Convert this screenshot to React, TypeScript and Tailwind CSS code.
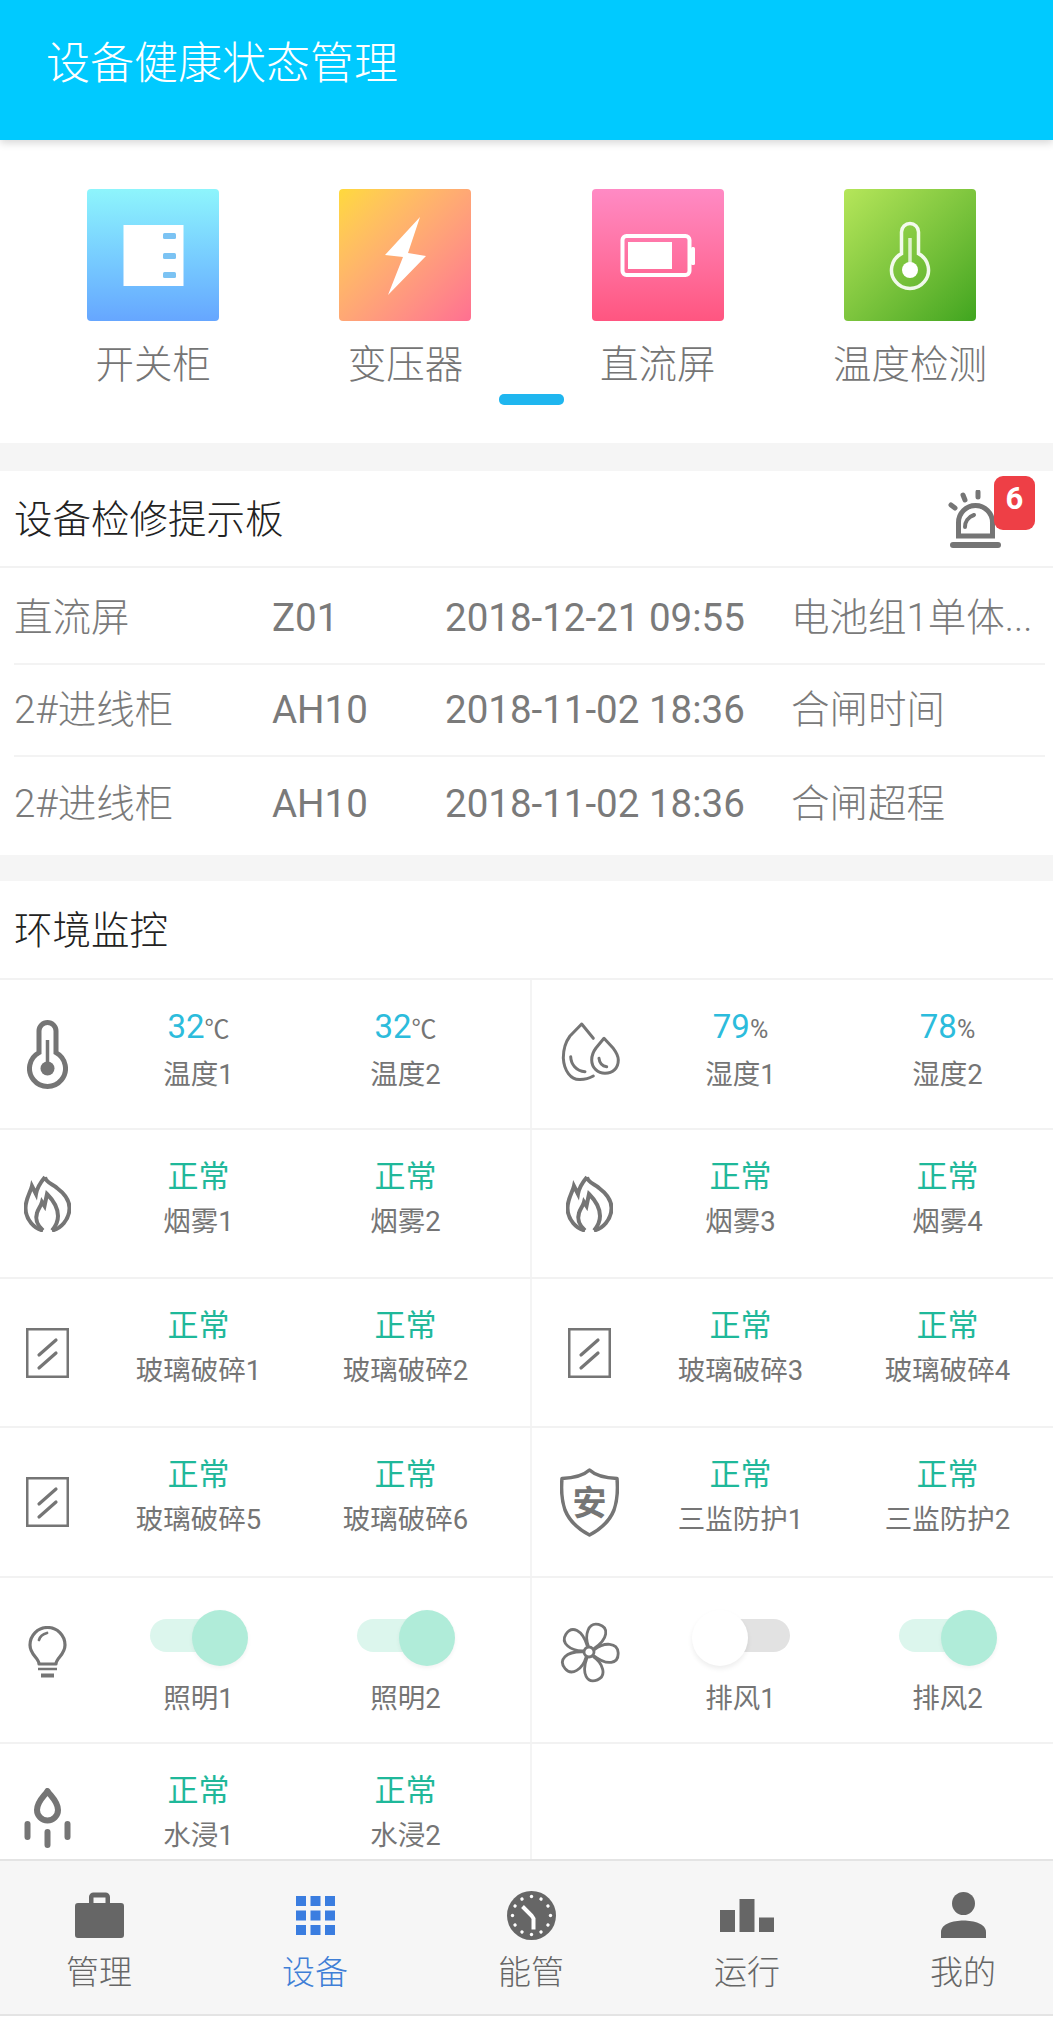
import type { ReactNode } from "react";

const GRAY = "#757575";

function ThermoIcon() {
  return (
    <svg width="41" height="69" viewBox="0 0 41 69" fill="none">
      <path d="M12 32.600V11a8.500 8.500 0 0 1 17 0V32.600a18 18 0 1 1-17 0Z" stroke={GRAY} strokeWidth="5" />
      <path d="M20.500 20V46" stroke={GRAY} strokeWidth="3.500" />
      <circle cx="20.500" cy="48.500" r="7" fill={GRAY} />
    </svg>
  );
}

function DropsIcon() {
  return (
    <svg className="mb-[4px] ml-[4px] overflow-visible" width="60" height="60" viewBox="0 0 60 60" fill="none" stroke={GRAY} strokeWidth="3" strokeLinecap="round" strokeLinejoin="round">
      <path d="M32.300 16.300 20.700 2 9 14C4.500 20 2.300 28 2.300 36 3 49 10 58 19 57.500 24 57.500 28 56.500 32.300 54" />
      <path d="M9.700 34.700C10 42 15 49 24 49.700" />
      <path d="M43 16.300 35 26C32 30 30.700 34 30.700 38 30.700 46 37 51.300 44 51.300 52 51.300 57.300 46 57.300 38 57.300 33 55 30 52 26Z" />
      <path d="M38 36.300C38.500 41 41 44 45.700 44.700" />
    </svg>
  );
}

function FlameIcon() {
  return (
    <svg width="47" height="57" viewBox="0 0 47 57" fill="none" stroke={GRAY} strokeWidth="4" strokeLinejoin="miter">
      <path d="M21 2C22 8 29 9 33 13 41 19 45.500 26 45.500 33 45.500 45 36 54 28 55.500M21 2C16 8 13 13 12 19L8 11C7 16 1.500 24 1.500 33 1.500 45 11 54 19 55.500" />
      <path d="M19 55.500C13 50 11 44 13 38 14 34 17 31 18 27L20.500 31 23 19C29 25 34 33 34 41 34 47 31 52 28 55.500" />
    </svg>
  );
}

function GlassIcon() {
  return (
    <svg width="43" height="50" viewBox="0 0 43 50" fill="none" stroke={GRAY}>
      <rect x="1.250" y="1.250" width="40.500" height="47.500" strokeWidth="2.500" />
      <path d="M13 27 30 12M13 40 30 25" strokeWidth="3.200" strokeLinecap="round" />
    </svg>
  );
}

function ShieldIcon() {
  return (
    <svg width="59" height="69" viewBox="0 0 59 69" fill="none">
      <path
        d="M29.500 2C24 7 15 10 2 10.500 1 22 1.500 32 5 42c4 10 13 19 24.500 25C41 61 50 52 54 42c3.500-10 4-20 3-31.500C44 10 35 7 29.500 2Z"
        stroke={GRAY}
        strokeWidth="3.500"
        strokeLinejoin="round"
      />
      <text x="29.500" y="47" textAnchor="middle" fontSize="34" fontWeight="700" fill={GRAY} fontFamily="Noto Sans CJK SC, sans-serif">
        安
      </text>
    </svg>
  );
}

function BulbIcon() {
  return (
    <svg className="mb-[16px]" width="39" height="53" viewBox="0 0 39 53" fill="none" stroke={GRAY}>
      <path d="M11 38c0-6-9-9-9-19a17.500 17.500 0 0 1 35 0c0 10-9 13-9 19Z" strokeWidth="3.200" strokeLinejoin="round" />
      <path d="M11 14c1-4 4-6 8-7" strokeWidth="2.800" strokeLinecap="round" />
      <path d="M10 43h19" strokeWidth="2.500" />
      <path d="M13 49.500h13" strokeWidth="4" />
    </svg>
  );
}

function FanIcon() {
  return (
    <svg className="mb-[16px]" width="62" height="64" viewBox="-31 -32 62 64" fill="none" stroke={GRAY} strokeWidth="2.800">
      {[25, 97, 169, 241, 313].map((deg) => (
        <path key={deg} d="M-3-5C-12-14-13-27-3-29 8-31 12-20 3-5" transform={`rotate(${deg})`} />
      ))}
      <circle r="5" fill="#fff" />
    </svg>
  );
}

function WaterIcon() {
  return (
    <svg width="47" height="60" viewBox="0 0 47 60" fill="none" stroke={GRAY} strokeLinecap="round">
      <path d="M23.500 3c3 5 10.500 10 10.500 19a10.500 10.500 0 0 1-21 0c0-9 7.500-14 10.500-19Z" strokeWidth="6" strokeLinejoin="round" />
      <path d="M3.500 36v13M23.500 44v13M43.500 36v13" strokeWidth="6" />
    </svg>
  );
}

function Reading({ value, unit, label, tone }: { value: string; unit?: string; label: string; tone: "num" | "ok" }) {
  return (
    <div className="flex flex-col items-center pt-[30px]">
      <div className={`leading-[34px] ${tone === "num" ? "text-[33px] text-[#2cbcdc]" : "text-[31px] text-[#1fb89a]"}`}>
        {value}
        {unit && <span className="text-[25px] text-[#757575]">{unit}</span>}
      </div>
      <div className="mt-[11px] text-[27.5px] leading-[34px] text-[#757575] whitespace-nowrap">{label}</div>
    </div>
  );
}

function Toggle({ label, on }: { label: string; on: boolean }) {
  return (
    <div className="flex flex-col items-center pt-[32px]">
      <div className="relative h-[56px] w-[98px]">
        <div
          className={`absolute top-[9px] h-[33px] rounded-full ${
            on ? "left-0 w-[84px] bg-[#dcf6ed]" : "right-0 w-[84px] bg-[#e2e2e2]"
          }`}
        />
        <div
          className={`absolute top-0 h-[56px] w-[56px] rounded-full ${
            on
              ? "right-0 bg-[#b0ecd9] shadow-[0_2px_4px_rgba(0,0,0,0.05)]"
              : "left-0 bg-white shadow-[0_3px_5px_rgba(0,0,0,0.07)]"
          }`}
        />
      </div>
      <div className="mt-[16px] text-[27.5px] leading-[34px] text-[#757575]">{label}</div>
    </div>
  );
}

function Cell({ icon, side, children }: { icon?: ReactNode; side: "l" | "r"; children?: ReactNode }) {
  return (
    <div
      className={`grid h-full ${
        side === "l"
          ? "grid-cols-[95px_207px_207px] border-r-2 border-[#f4f4f4]"
          : "grid-cols-[105px_207px_207px]"
      }`}
    >
      <div className={`flex items-center justify-center ${side === "l" ? "" : "pl-[9px]"}`}>{icon}</div>
      {children}
    </div>
  );
}

function EnvRow({ h, left, right }: { h: string; left: ReactNode; right: ReactNode }) {
  return (
    <div className={`grid shrink-0 grid-cols-[532px_521px] border-b-2 border-[#f2f2f2] ${h}`}>
      {left}
      {right}
    </div>
  );
}

function ok(label: string) {
  return <Reading value="正常" label={label} tone="ok" />;
}

function Feature({ label, card, children }: { label: string; card: string; children: ReactNode }) {
  return (
    <div className="flex flex-col items-center">
      <div className={`h-[132px] w-[132px] rounded-[4px] ${card}`}>{children}</div>
      <div className="mt-[22px] text-[38.5px] leading-[44px] text-[#757575] whitespace-nowrap font-light">{label}</div>
    </div>
  );
}

const faults = [
  { name: "直流屏", code: "Z01", time: "2018-12-21 09:55", msg: "电池组1单体...", h: "h-[97px]", pad: "pt-[4px]", line: true },
  { name: "2#进线柜", code: "AH10", time: "2018-11-02 18:36", msg: "合闸时间", h: "h-[92px]", pad: "", line: true },
  { name: "2#进线柜", code: "AH10", time: "2018-11-02 18:36", msg: "合闸超程", h: "h-[98px]", pad: "pb-[4px]", line: false },
];

const tabs = [
  {
    label: "管理",
    icon: (
      <svg width="49" height="46" viewBox="0 0 49 46" fill="#666">
        <path d="M14 11V5a4.500 4.500 0 0 1 4.500-4.500h12A4.500 4.500 0 0 1 35 5v6h11a3 3 0 0 1 3 3v29a3 3 0 0 1-3 3H3a3 3 0 0 1-3-3V14a3 3 0 0 1 3-3Zm4.500 0h12V5.500h-12Z" fillRule="evenodd" />
      </svg>
    ),
  },
  {
    label: "设备",
    active: true,
    icon: (
      <svg width="39" height="39" viewBox="0 0 39 39" fill="#3a7de0">
        {[0, 14.5, 29].map((y) =>
          [0, 14.5, 29].map((x) => <rect key={`${x}-${y}`} x={x} y={y} width="10" height="10" />)
        )}
      </svg>
    ),
  },
  {
    label: "能管",
    icon: (
      <svg width="49" height="49" viewBox="-24.500 -24.500 49 49">
        <circle r="24.500" fill="#666" />
        {Array.from({ length: 12 }, (_, i) => i * 30).map((deg) => (
          <circle key={deg} cy="-19" r="1.700" fill="#fff" transform={`rotate(${deg})`} />
        ))}
        <path d="M-9-9 0 0 2 3V14" fill="none" stroke="#fff" strokeWidth="4" />
      </svg>
    ),
  },
  {
    label: "运行",
    icon: (
      <svg width="54" height="33" viewBox="0 0 54 33" fill="#666">
        <rect x="0" y="11" width="15" height="22" />
        <rect x="19.500" y="0" width="15" height="33" />
        <rect x="39" y="18.500" width="15" height="14.500" />
      </svg>
    ),
  },
  {
    label: "我的",
    icon: (
      <svg width="45" height="46" viewBox="0 0 45 46" fill="#666">
        <circle cx="22.500" cy="11.500" r="11.500" />
        <path d="M0 46v-6c0-8 12-11.500 22.500-11.500S45 32 45 40v6Z" />
      </svg>
    ),
  },
];

export default function App() {
  return (
    <div className="flex h-[2023px] w-[1053px] flex-col overflow-hidden bg-white font-['Roboto','Noto_Sans_CJK_SC',sans-serif]">
      <div className="min-h-0 flex-1 overflow-hidden">
        {/* Title bar */}
        <header className="relative z-10 flex h-[140px] items-center bg-[#00caff] pb-[12px] pl-[46px] shadow-[0_3px_8px_rgba(0,0,0,0.16)]">
          <h1 className="text-[44px] font-light text-white">设备健康状态管理</h1>
        </header>

        {/* Equipment categories */}
        <section className="h-[303px] pt-[49px]">
          <div className="grid grid-cols-[repeat(4,252.3px)] pl-[27px]">
            <Feature label="开关柜" card="bg-gradient-to-b from-[#8ef5fc] to-[#66a6ff]">
              <svg width="132" height="132" viewBox="0 0 132 132">
                <rect x="36.500" y="36" width="60" height="61" fill="#fff" />
                <rect x="76" y="44" width="13" height="6" rx="1.500" fill="#7cc3f3" />
                <rect x="76" y="64" width="13" height="6" rx="1.500" fill="#7cc3f3" />
                <rect x="76" y="83" width="13" height="6" rx="1.500" fill="#7cc3f3" />
              </svg>
            </Feature>
            <Feature label="变压器" card="bg-gradient-to-br from-[#ffd93b] to-[#ff6f91]">
              <svg width="132" height="132" viewBox="0 0 132 132">
                <path d="M81 28 46 66l18 2-15 38 38-39-18-3Z" fill="#fff" />
              </svg>
            </Feature>
            <Feature label="直流屏" card="bg-gradient-to-b from-[#ff8ac4] to-[#ff5580]">
              <svg width="132" height="132" viewBox="0 0 132 132" fill="none">
                <rect x="30.500" y="47" width="67" height="39" rx="4" stroke="#fff" strokeWidth="4" />
                <rect x="36" y="53" width="44" height="27" fill="#fff" />
                <rect x="99" y="58" width="4" height="18" rx="1.500" fill="#fff" />
              </svg>
            </Feature>
            <Feature label="温度检测" card="bg-gradient-to-br from-[#b5e65a] to-[#3fa51f]">
              <svg width="132" height="132" viewBox="0 0 132 132" fill="none" stroke="#fff">
                <path d="M57.500 64.600V43a8.500 8.500 0 0 1 17 0V64.600a18.500 18.500 0 1 1-17 0Z" strokeWidth="3.500" strokeOpacity="0.9" />
                <path d="M66 49V76" strokeOpacity="0.75" strokeWidth="3.500" />
                <circle cx="66" cy="81" r="8" fill="#fff" stroke="none" />
              </svg>
            </Feature>
          </div>
          <div className="ml-[499px] mt-[7px] h-[11px] w-[65px] rounded-[5px] bg-[#1fb6ef]" />
        </section>

        <div className="h-[28px] bg-[#f5f5f5]" />

        {/* Maintenance board */}
        <section>
          <div className="relative flex h-[97px] items-center border-b-2 border-[#f2f2f2] pl-[14px]">
            <h2 className="pt-[2px] text-[38.5px] font-light text-[#222]">设备检修提示板</h2>
            <svg className="absolute left-[948px] top-[19px]" width="56" height="60" viewBox="0 0 56 60" fill="none" stroke={GRAY}>
              <path d="M10.500 46V32.500a17 17 0 0 1 34 0V46Z" strokeWidth="5" />
              <path d="M17 37c0-5 3-10 9-12" strokeWidth="4" strokeLinecap="round" />
              <path d="M3 15l4 3M15 5l2 5M30 2v5" strokeWidth="5" strokeLinecap="round" />
              <rect x="2" y="52" width="51" height="6" rx="3" fill={GRAY} stroke="none" />
            </svg>
            <div className="absolute left-[994px] top-[5px] flex h-[54px] w-[41px] items-center justify-center rounded-[9px] bg-[#ee3f46] pb-[8px] text-[31px] font-bold text-white">
              6
            </div>
          </div>
          {faults.map((f, i) => (
            <div key={i} className={`pl-[14px] pr-[8px] ${f.h}`}>
              <div
                className={`grid h-full grid-cols-[258px_173px_346px_1fr] items-center text-[38.5px] text-[#7a7a7a] font-light ${f.pad} ${
                  f.line ? "border-b-2 border-[#f3f3f3]" : ""
                }`}
              >
                <span className="whitespace-nowrap">{f.name}</span>
                <span className="text-[38.5px] font-normal">{f.code}</span>
                <span className="text-[38.5px] font-normal whitespace-nowrap">{f.time}</span>
                <span className="whitespace-nowrap">{f.msg}</span>
              </div>
            </div>
          ))}
        </section>

        <div className="h-[26px] bg-[#f5f5f5]" />

        {/* Environment monitoring */}
        <section>
          <div className="flex h-[99px] items-center border-b-2 border-[#f2f2f2] pl-[14px]">
            <h2 className="pt-[2px] text-[38.5px] font-light text-[#222]">环境监控</h2>
          </div>
          <EnvRow
            h="h-[150px]"
            left={
              <Cell side="l" icon={<ThermoIcon />}>
                <Reading value="32" unit="℃" label="温度1" tone="num" />
                <Reading value="32" unit="℃" label="温度2" tone="num" />
              </Cell>
            }
            right={
              <Cell side="r" icon={<DropsIcon />}>
                <Reading value="79" unit="%" label="湿度1" tone="num" />
                <Reading value="78" unit="%" label="湿度2" tone="num" />
              </Cell>
            }
          />
          <EnvRow
            h="h-[149px]"
            left={
              <Cell side="l" icon={<FlameIcon />}>
                {ok("烟雾1")}
                {ok("烟雾2")}
              </Cell>
            }
            right={
              <Cell side="r" icon={<FlameIcon />}>
                {ok("烟雾3")}
                {ok("烟雾4")}
              </Cell>
            }
          />
          <EnvRow
            h="h-[149px]"
            left={
              <Cell side="l" icon={<GlassIcon />}>
                {ok("玻璃破碎1")}
                {ok("玻璃破碎2")}
              </Cell>
            }
            right={
              <Cell side="r" icon={<GlassIcon />}>
                {ok("玻璃破碎3")}
                {ok("玻璃破碎4")}
              </Cell>
            }
          />
          <EnvRow
            h="h-[150px]"
            left={
              <Cell side="l" icon={<GlassIcon />}>
                {ok("玻璃破碎5")}
                {ok("玻璃破碎6")}
              </Cell>
            }
            right={
              <Cell side="r" icon={<ShieldIcon />}>
                {ok("三监防护1")}
                {ok("三监防护2")}
              </Cell>
            }
          />
          <EnvRow
            h="h-[166px]"
            left={
              <Cell side="l" icon={<BulbIcon />}>
                <Toggle label="照明1" on />
                <Toggle label="照明2" on />
              </Cell>
            }
            right={
              <Cell side="r" icon={<FanIcon />}>
                <Toggle label="排风1" on={false} />
                <Toggle label="排风2" on />
              </Cell>
            }
          />
          <EnvRow
            h="h-[150px]"
            left={
              <Cell side="l" icon={<WaterIcon />}>
                {ok("水浸1")}
                {ok("水浸2")}
              </Cell>
            }
            right={<Cell side="r" />}
          />
        </section>
      </div>

      {/* Bottom tabs */}
      <nav className="h-[157px] shrink-0 overflow-hidden border-y-2 border-[#e4e4e4] bg-[#f6f6f6] pt-[30px]">
        <div className="ml-[-9px] flex w-[1080px]">
          {tabs.map((t) => (
            <div key={t.label} className="flex w-[216px] flex-col items-center">
              <div className="flex h-[48px] items-center justify-center">{t.icon}</div>
              <div className={`mt-[14px] text-[33px] font-light leading-[40px] ${t.active ? "text-[#3f7fd6]" : "text-[#666]"}`}>
                {t.label}
              </div>
            </div>
          ))}
        </div>
      </nav>
      <div className="h-[7px] shrink-0 bg-white" />
    </div>
  );
}
